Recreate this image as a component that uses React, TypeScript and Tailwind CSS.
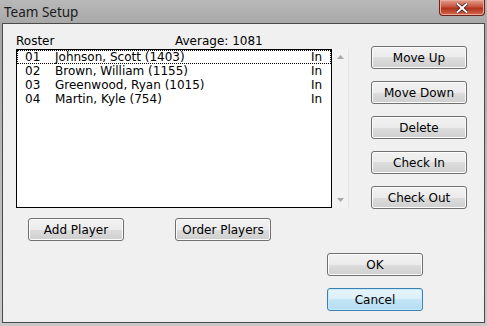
import React from 'react';

const players = [
  { no: '01', name: 'Johnson, Scott (1403)', status: 'In' },
  { no: '02', name: 'Brown, William (1155)', status: 'In' },
  { no: '03', name: 'Greenwood, Ryan (1015)', status: 'In' },
  { no: '04', name: 'Martin, Kyle (754)', status: 'In' },
];

const font = { fontFamily: '"DejaVu Sans", sans-serif' };

const WinButton: React.FC<{ label: string; focused?: boolean; className?: string }> = ({ label, focused, className = '' }) => (
  <button
    className={`h-[23px] w-[96px] rounded-[3px] border text-[12px] leading-[14px] text-black ${
      focused
        ? 'border-[#3c7fb1] bg-[linear-gradient(#e5f4fc_0%,#dceff9_50%,#c4e5f6_50%,#b5ddf3_100%)] shadow-[inset_0_0_0_1px_#c7eafb]'
        : 'border-[#707070] bg-[linear-gradient(#f2f2f2_0%,#ebebeb_50%,#dddddd_50%,#cfcfcf_100%)] shadow-[inset_0_0_0_1px_#fcfcfc]'
    } ${className}`}
  >
    {label}
  </button>
);

export default function App() {
  return (
    <div className="flex h-[326px] w-[487px] flex-col bg-[linear-gradient(180deg,#b9b9b9_0%,#a6a6a6_8%,#bcbcbc_60%,#c9c9c9_100%)]" style={font}>
      {/* title bar */}
      <div className="flex h-[23px] items-start justify-between">
        <span className="pl-[4px] pt-[2px] text-[13.5px] text-[#1b1b1b]" style={{ fontFamily: '"Noto Sans", "Open Sans", sans-serif' }}>
          Team Setup
        </span>
        <div className="mr-[2px] flex h-[16px] w-[46px] items-center justify-center rounded-b-[4px] border border-t-0 border-[#6b231b] bg-[linear-gradient(#e2a08f_0%,#c8533d_45%,#b0311b_55%,#d46a4e_100%)] shadow-[inset_0_0_0_1px_#eba99a]">
          <svg width="12" height="10" viewBox="0 0 12 10">
            <path d="M1.5 1 L10.5 9 M10.5 1 L1.5 9" stroke="#3a1a16" strokeWidth="3.4" strokeLinecap="square" />
            <path d="M1.5 1 L10.5 9 M10.5 1 L1.5 9" stroke="#ffffff" strokeWidth="2" strokeLinecap="square" />
          </svg>
        </div>
      </div>

      {/* client area */}
      <div className="mx-[2px] mb-[3px] flex-1 border border-[#4a4a4a] bg-[#f0f0f0] pt-[10px] text-[12px] text-black">
        <div className="flex pl-[13px]">
          {/* roster */}
          <div className="w-[333px]">
            <div className="flex h-[15px] items-start leading-[14px]">
              <span className="w-[159px]">Roster</span>
              <span>Average: 1081</span>
            </div>
            <div className="flex">
              <div className="h-[159px] w-[316px] border border-black bg-white p-0">
                {players.map((p, i) => (
                  <div
                    key={p.no}
                    className={`flex h-[14px] items-center leading-[14px] ${i === 0 ? 'outline-1 outline-dotted outline-offset-[-1px] outline-black' : ''}`}
                  >
                    <span className="w-[38px] pl-[8px]">{p.no}</span>
                    <span className="flex-1">{p.name}</span>
                    <span className="w-[20px]">{p.status}</span>
                  </div>
                ))}
              </div>
              <div className="flex w-[17px] flex-col items-center justify-between border-r border-[#e4e4e4] bg-[#f2f2f2] py-[6px]">
                <svg width="7" height="4" viewBox="0 0 7 4"><path d="M3.5 0 L7 4 L0 4 Z" fill="#a8a8a8" /></svg>
                <svg width="7" height="4" viewBox="0 0 7 4"><path d="M0 0 L7 0 L3.5 4 Z" fill="#a8a8a8" /></svg>
              </div>
            </div>
            <div className="mt-[10px] flex pl-[12px]">
              <WinButton label="Add Player" />
              <WinButton label="Order Players" className="ml-[51px]" />
            </div>
          </div>

          {/* side buttons */}
          <div className="ml-[22px] mt-[12px] flex flex-col gap-[12px]">
            <WinButton label="Move Up" />
            <WinButton label="Move Down" />
            <WinButton label="Delete" />
            <WinButton label="Check In" />
            <WinButton label="Check Out" />
          </div>
        </div>

        <div className="ml-[324px] mt-[12px] flex flex-col gap-[12px]">
          <WinButton label="OK" />
          <WinButton label="Cancel" focused />
        </div>
      </div>
    </div>
  );
}
